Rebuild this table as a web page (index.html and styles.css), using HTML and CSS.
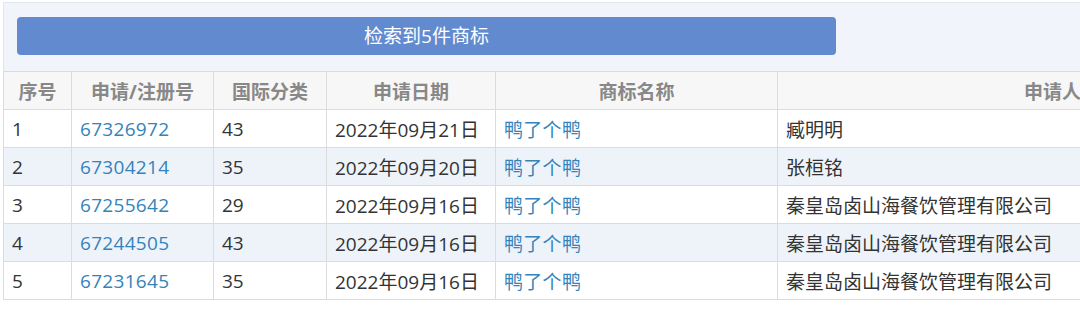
FILE: index.html
```html
<!DOCTYPE html>
<html lang="zh">
<head>
<meta charset="utf-8">
<link rel="stylesheet" href="styles.css">
</head>
<body>
<div class="panel">
  <div class="toolbar">
    <div class="result-btn">检索到5件商标</div>
  </div>
  <table class="tm-table">
    <colgroup>
      <col class="c1"><col class="c2"><col class="c3"><col class="c4"><col class="c5"><col class="c6">
    </colgroup>
    <thead>
      <tr><th>序号</th><th>申请/注册号</th><th>国际分类</th><th>申请日期</th><th>商标名称</th><th>申请人</th></tr>
    </thead>
    <tbody>
      <tr><td>1</td><td><a class="lnk">67326972</a></td><td>43</td><td>2022年09月21日</td><td><a class="lnk">鸭了个鸭</a></td><td>臧明明</td></tr>
      <tr><td>2</td><td><a class="lnk">67304214</a></td><td>35</td><td>2022年09月20日</td><td><a class="lnk">鸭了个鸭</a></td><td>张桓铭</td></tr>
      <tr><td>3</td><td><a class="lnk">67255642</a></td><td>29</td><td>2022年09月16日</td><td><a class="lnk">鸭了个鸭</a></td><td>秦皇岛卤山海餐饮管理有限公司</td></tr>
      <tr><td>4</td><td><a class="lnk">67244505</a></td><td>43</td><td>2022年09月16日</td><td><a class="lnk">鸭了个鸭</a></td><td>秦皇岛卤山海餐饮管理有限公司</td></tr>
      <tr><td>5</td><td><a class="lnk">67231645</a></td><td>35</td><td>2022年09月16日</td><td><a class="lnk">鸭了个鸭</a></td><td>秦皇岛卤山海餐饮管理有限公司</td></tr>
    </tbody>
  </table>
</div>
</body>
</html>
```

FILE: styles.css
```css
html, body {
  margin: 0;
  padding: 0;
  background: #ffffff;
  overflow: hidden;
}
body {
  font-family: "Open Sans", "Noto Sans CJK SC", sans-serif;
  color: #333333;
}
.panel {
  margin: 2px 0 0 3px;
  border-top: 1px solid #e2e6ee;
  border-left: 1px solid #e2e6ee;
  width: 1400px;
}
.toolbar {
  background: #f1f5fb;
  padding: 14px 13px 16px 13px;
}
.result-btn {
  width: 819px;
  height: 38px;
  background: #628bcf;
  border-radius: 4px;
  color: #ffffff;
  font-size: 19px;
  line-height: 38px;
  text-align: center;
}
.tm-table {
  border-collapse: collapse;
  table-layout: fixed;
  width: 1324px;
  margin-left: -1px;
  font-size: 19px;
}
.c1 { width: 68px; }
.c2 { width: 142px; }
.c3 { width: 113px; }
.c4 { width: 169px; }
.c5 { width: 282px; }
.c6 { width: 550px; }
.tm-table th,
.tm-table td {
  border: 1px solid #dcdcdc;
  height: 37px;
  padding: 0 8px;
  white-space: nowrap;
  overflow: hidden;
}
.tm-table th {
  background: #f7f7f7;
  color: #888888;
  font-weight: bold;
  text-align: center;
}
.tm-table td {
  text-align: left;
  color: #333333;
}
.tm-table tbody tr:nth-child(even) td {
  background: #eef3fa;
}
.lnk {
  color: #3483ba;
  text-decoration: none;
  letter-spacing: 0.3px;
}
```
